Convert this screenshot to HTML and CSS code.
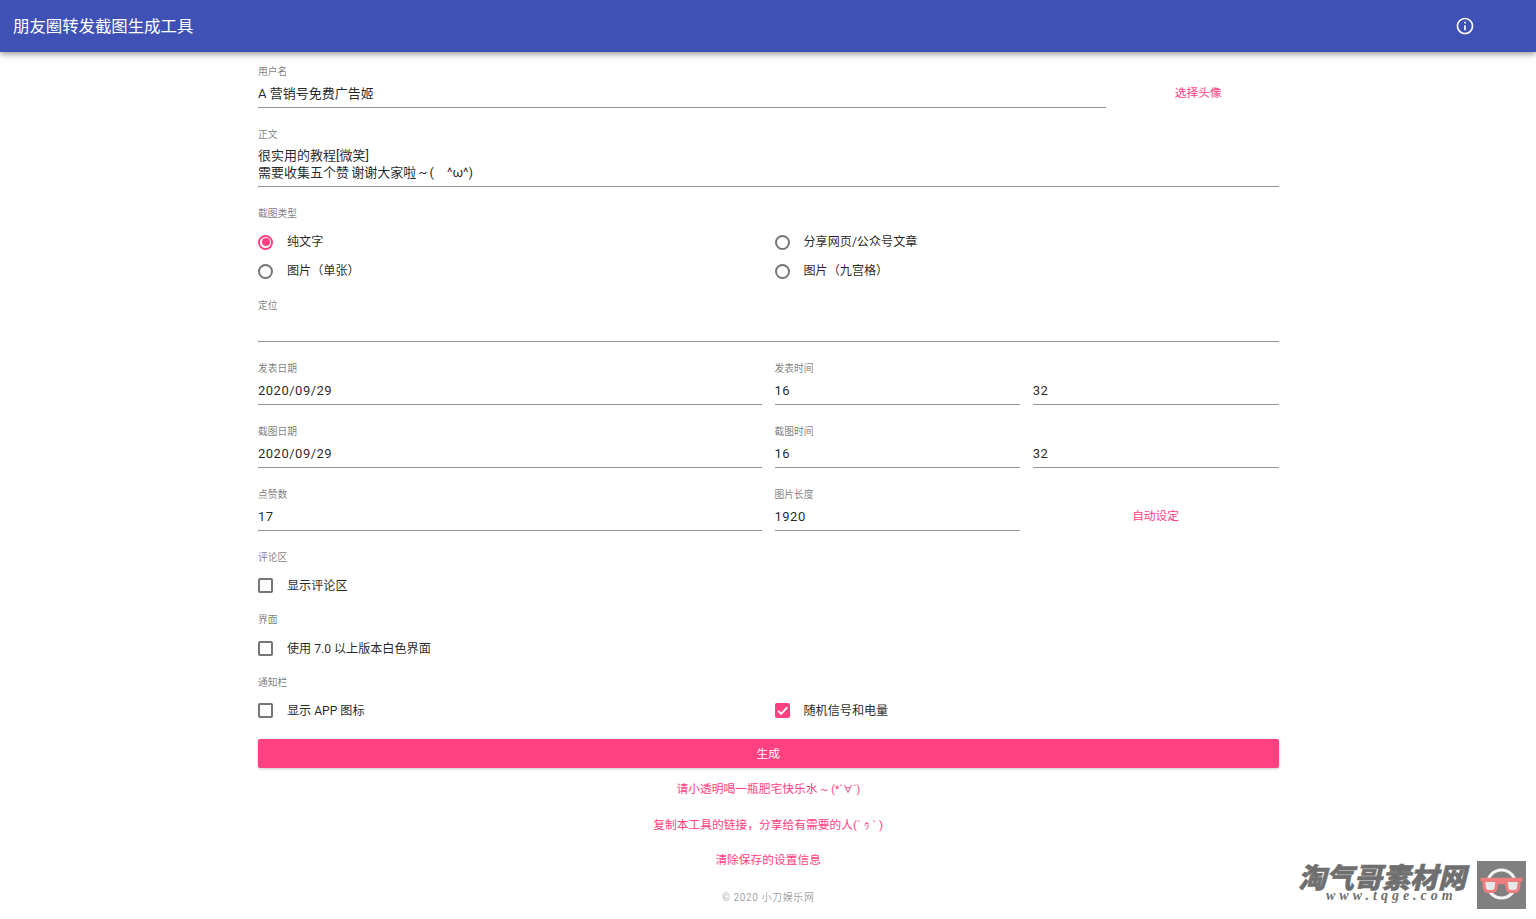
FILE: index.html

```html
<!DOCTYPE html>
<html lang="zh-CN">
<head>
  <meta charset="UTF-8">
  <meta name="viewport" content="width=device-width, initial-scale=1">
  <title>朋友圈转发截图生成工具</title>
  <link rel="stylesheet" href="styles.css">
</head>
<body>

<header class="app-bar">
  <h1>朋友圈转发截图生成工具</h1>
  <svg class="info-icon" viewBox="0 0 24 24" fill="#fff"><path d="M11 7h2v2h-2zm0 4h2v6h-2zm1-9C6.48 2 2 6.48 2 12s4.48 10 10 10 10-4.48 10-10S17.52 2 12 2zm0 18c-4.41 0-8-3.59-8-8s3.59-8 8-8 8 3.59 8 8-3.59 8-8 8z"/></svg>
</header>

<main class="form">
  <div class="row row-avatar">
    <div class="field">
      <label>用户名</label>
      <div class="value">A 营销号免费广告姬</div>
    </div>
    <a class="text-btn">选择头像</a>
  </div>

  <div class="field field-multi">
    <label>正文</label>
    <div class="value">很实用的教程[微笑]<br>需要收集五个赞 谢谢大家啦 ~ (　^ω^)</div>
  </div>

  <div class="group">
    <label>截图类型</label>
    <div class="options">
      <div class="option"><span class="radio checked"></span>纯文字</div>
      <div class="option"><span class="radio"></span>分享网页/公众号文章</div>
      <div class="option"><span class="radio"></span>图片（单张）</div>
      <div class="option"><span class="radio"></span>图片（九宫格）</div>
    </div>
  </div>

  <div class="field">
    <label>定位</label>
    <div class="value">&nbsp;</div>
  </div>

  <div class="row">
    <div class="field">
      <label>发表日期</label>
      <div class="value num">2020/09/29</div>
    </div>
    <div class="row">
      <div class="field">
        <label>发表时间</label>
        <div class="value num">16</div>
      </div>
      <div class="field">
        <label>&nbsp;</label>
        <div class="value num">32</div>
      </div>
    </div>
  </div>

  <div class="row">
    <div class="field">
      <label>截图日期</label>
      <div class="value num">2020/09/29</div>
    </div>
    <div class="row">
      <div class="field">
        <label>截图时间</label>
        <div class="value num">16</div>
      </div>
      <div class="field">
        <label>&nbsp;</label>
        <div class="value num">32</div>
      </div>
    </div>
  </div>

  <div class="row">
    <div class="field">
      <label>点赞数</label>
      <div class="value num">17</div>
    </div>
    <div class="row">
      <div class="field">
        <label>图片长度</label>
        <div class="value num">1920</div>
      </div>
      <a class="text-btn">自动设定</a>
    </div>
  </div>

  <div class="group">
    <label>评论区</label>
    <div class="options">
      <div class="option option-check"><span class="checkbox"></span>显示评论区</div>
    </div>
  </div>

  <div class="group">
    <label>界面</label>
    <div class="options">
      <div class="option option-check"><span class="checkbox"></span>使用 7.0 以上版本白色界面</div>
    </div>
  </div>

  <div class="group">
    <label>通知栏</label>
    <div class="options">
      <div class="option option-check"><span class="checkbox"></span>显示 APP 图标</div>
      <div class="option option-check">
        <span class="checkbox checked">
          <svg viewBox="0 0 24 24" fill="none" stroke="#fff" stroke-width="3"><path d="M5 12.5l4.800 4.800L19.500 7"/></svg>
        </span>随机信号和电量
      </div>
    </div>
  </div>

  <button class="generate">生成</button>

  <div class="links">
    <a>请小透明喝一瓶肥宅快乐水 ~ <span class="kao">(*´∀`)</span></a>
    <a>复制本工具的链接，分享给有需要的人(´ ｩ ` )</a>
    <a>清除保存的设置信息</a>
  </div>

  <footer>© 2020 小刀娱乐网</footer>
</main>

<!-- watermark sits over the page corner -->
<div class="watermark">
  <div class="wm-text">
    <strong>淘气哥素材网</strong>
    <span>www.tqge.com</span>
  </div>
  <svg class="wm-logo" viewBox="0 0 49 48">
    <rect width="49" height="48" fill="#808080"/>
    <circle cx="24.500" cy="23" r="14" fill="none" stroke="#f4f4f4" stroke-width="3"/>
    <path d="M6.500 19.500h13.500l-1 7.500c-.3 2-1.500 3.500-3.500 3.500h-4.500c-2 0-3.200-1.500-3.500-3.500zM29 19.500h13.500l-1 7.500c-.3 2-1.500 3.500-3.500 3.500h-4.500c-2 0-3.200-1.500-3.500-3.500z" fill="#e4e8e8" stroke="#ee7d7d" stroke-width="3"/>
    <path d="M3.500 18.500h42M20 21.500h9" fill="none" stroke="#ee7d7d" stroke-width="3.500"/>
  </svg>
</div>

</body>
</html>
```

FILE: styles.css

```css
body {
  margin: 0;
  background: #fff;
  font-family: Roboto, "Noto Sans CJK SC", sans-serif;
  color: rgba(0, 0, 0, 0.87);
  height: 919px;
  overflow: hidden;
  position: relative;
}
.app-bar {
  height: 52px;
  background: #3f51b5;
  color: #fff;
  display: flex;
  align-items: center;
  justify-content: space-between;
  padding: 0 61px 0 13px;
  box-shadow: 0 2px 4px -1px rgba(0,0,0,0.2), 0 4px 5px 0 rgba(0,0,0,0.14), 0 1px 10px 0 rgba(0,0,0,0.12);
}
.app-bar h1 {
  margin: 0 0 2px;
  font-size: 16.4px;
  font-weight: 400;
}
.info-icon {
  width: 20px;
  height: 20px;
}
.form {
  width: 1020.5px;
  margin-left: 258px;
  padding-top: 13px;
  display: flex;
  flex-direction: column;
  gap: 20px;
}
.row {
  display: grid;
  grid-template-columns: 1fr 1fr;
  column-gap: 12.5px;
}
.row-avatar {
  grid-template-columns: 1fr 160.5px;
}
.field {
  display: flex;
  flex-direction: column;
  border-bottom: 1px solid rgba(0, 0, 0, 0.42);
  padding-bottom: 5px;
}
label {
  display: block;
  font-size: 9.75px;
  line-height: 14px;
  color: rgba(0, 0, 0, 0.54);
}
.value {
  font-size: 13px;
  line-height: 17px;
  margin-top: 6px;
}
.num {
  letter-spacing: 0.5px;
}
.field-multi .value {
  margin-top: 5px;
  word-spacing: -1px;
}
.text-btn {
  align-self: end;
  height: 30px;
  line-height: 30px;
  text-align: center;
  font-size: 11.75px;
  color: #ff4081;
}
.options {
  display: grid;
  grid-template-columns: 1fr 1fr;
  column-gap: 12.5px;
  row-gap: 14px;
  margin-top: 13.5px;
}
.option {
  display: flex;
  align-items: flex-start;
  height: 15px;
  font-size: 12.1px;
  line-height: 15px;
}
.option-check {
  line-height: 17px;
}
.radio,
.checkbox {
  box-sizing: border-box;
  flex: none;
  width: 15px;
  height: 15px;
  margin-right: 14px;
  border: 2px solid #757575;
}
.radio {
  border-radius: 50%;
  position: relative;
}
.radio.checked {
  border-color: #ff4081;
}
.radio.checked::after {
  content: "";
  position: absolute;
  top: 1.5px;
  left: 1.5px;
  width: 8px;
  height: 8px;
  border-radius: 50%;
  background: #ff4081;
}
.checkbox {
  border-radius: 2px;
}
.checkbox.checked {
  background: #ff4081;
  border: none;
}
.checkbox svg {
  display: block;
  width: 15px;
  height: 15px;
}
.generate {
  height: 29px;
  margin-top: 1px;
  padding: 0 0 2px;
  background: #ff4081;
  color: #fff;
  border: none;
  border-radius: 2px;
  font-family: inherit;
  font-size: 11.75px;
  box-shadow: 0 1px 3px rgba(0,0,0,0.2);
}
.links {
  display: flex;
  flex-direction: column;
  gap: 17px;
  margin-top: -8.5px;
  text-align: center;
  font-size: 11.75px;
  line-height: 18px;
  color: #ff4081;
}
.kao {
  font-size: 10.5px;
}
footer {
  text-align: center;
  font-size: 10px;
  line-height: 14px;
  letter-spacing: 0.6px;
  color: rgba(0, 0, 0, 0.4);
  margin-top: 2.5px;
}
.watermark {
  position: absolute;
  left: 1298px;
  top: 861px;
  display: flex;
  gap: 9px;
}
.wm-text {
  width: 170px;
  color: #6f6f6f;
}
.wm-text strong {
  display: block;
  font-size: 28px;
  line-height: 36px;
  font-style: italic;
  font-weight: 900;
  white-space: nowrap;
  -webkit-text-stroke: 0.5px #6f6f6f;
}
.wm-text span {
  display: block;
  margin-top: -7px;
  font-family: "Liberation Serif", serif;
  font-size: 14px;
  line-height: 12px;
  font-style: italic;
  font-weight: bold;
  letter-spacing: 4px;
  padding-left: 28px;
}
.wm-logo {
  width: 49px;
  height: 48px;
}
```
